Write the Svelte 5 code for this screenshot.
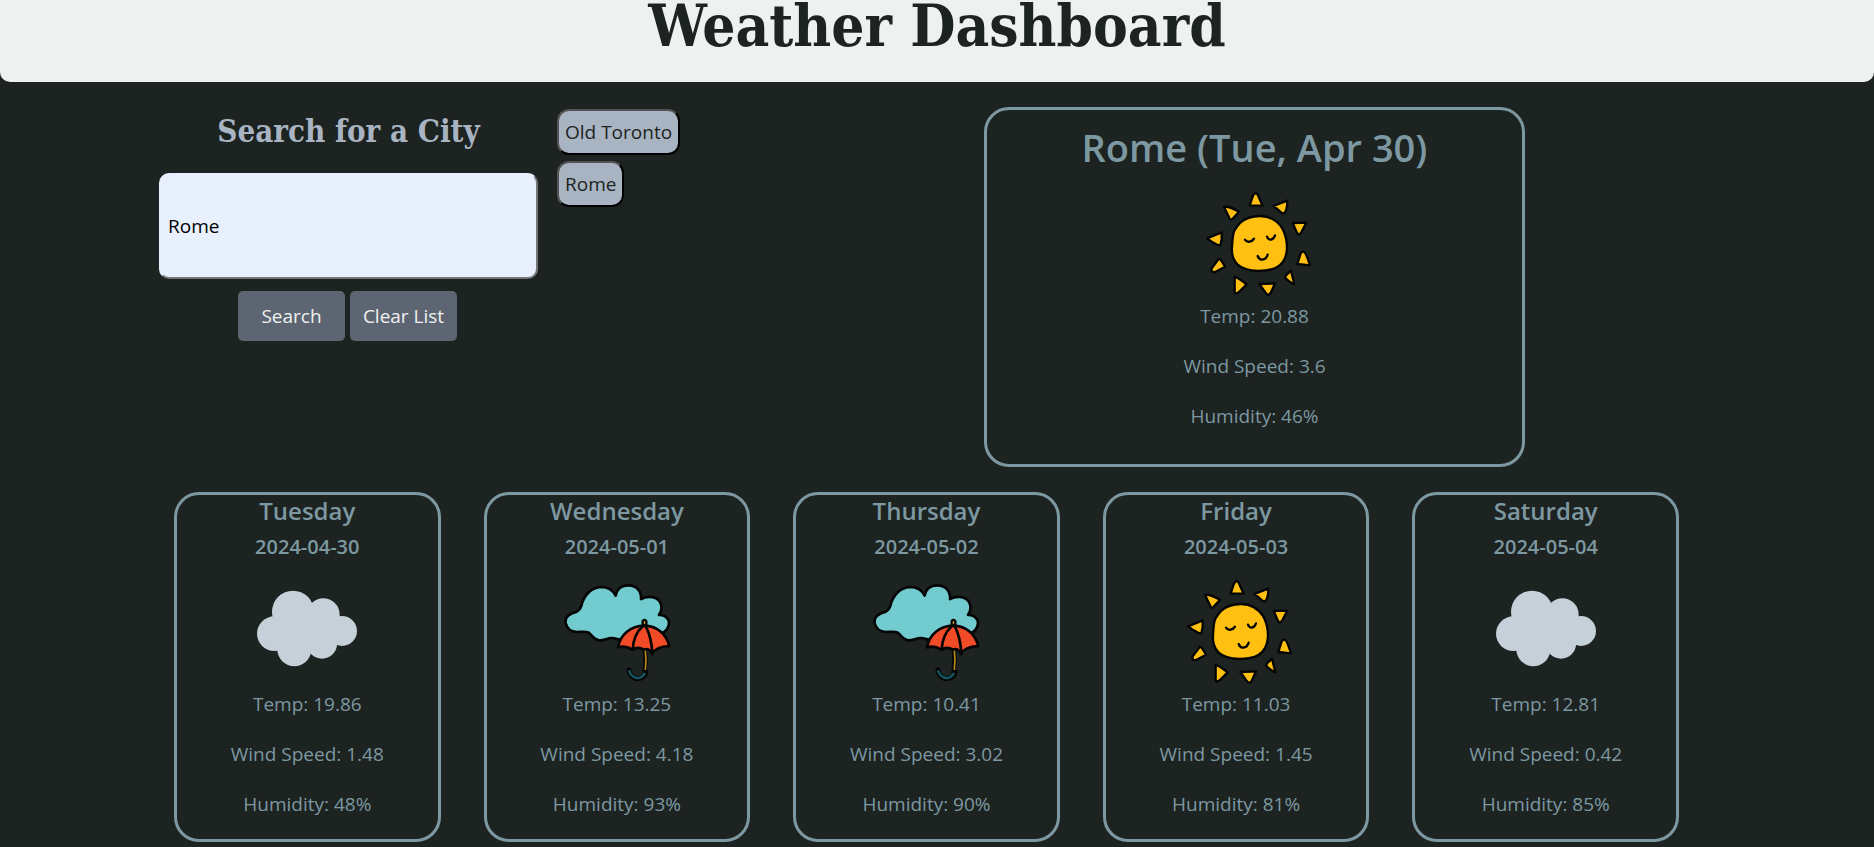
<script>
  let query = $state('Rome');
  let cities = $state(['Old Toronto', 'Rome']);

  const current = { title: 'Rome (Tue, Apr 30)', icon: 'sun', temp: '20.88', wind: '3.6', humidity: 46 };

  const days = [
    { name: 'Tuesday', date: '2024-04-30', icon: 'cloud', temp: '19.86', wind: '1.48', humidity: 48 },
    { name: 'Wednesday', date: '2024-05-01', icon: 'rain', temp: '13.25', wind: '4.18', humidity: 93 },
    { name: 'Thursday', date: '2024-05-02', icon: 'rain', temp: '10.41', wind: '3.02', humidity: 90 },
    { name: 'Friday', date: '2024-05-03', icon: 'sun', temp: '11.03', wind: '1.45', humidity: 81 },
    { name: 'Saturday', date: '2024-05-04', icon: 'cloud', temp: '12.81', wind: '0.42', humidity: 85 }
  ];

  function search(event) {
    event.preventDefault();
    const city = query.trim();
    if (city && !cities.includes(city)) cities.push(city);
  }
</script>

{#snippet weatherIcon(kind)}
  {#if kind === 'sun'}
    <svg class="icon" viewBox="0 0 390 360" role="img" aria-label="Clear sky">
      <g fill="#ffc012" stroke="#050505" stroke-width="7" stroke-linejoin="round" stroke-linecap="round">
        <path d="M150 126C168 109 186 105 210 105C240 105 262 119 277 142C287 160 291 181 291 202C290 226 280 247 262 258C245 268 225 270 204 270C176 269 157 264 143 251C128 236 124 219 126 197C128 176 127 162 133 149Q140 137 150 126Z" />
        <path d="M197 36Q191 37 187 49L179 74L218 74L207 50Q202 36 197 36Z" />
        <path d="M251 75L291 59Q294 70 287 91Q281 101 274 95Z" />
        <path d="M308 126L349 125L334 154Q327 165 321 156Z" />
        <path d="M339 212Q347 211 360 253L322 249L331 220Q334 212 339 212Z" />
        <path d="M303 269L313 309Q304 308 287 292Q284 288 291 280Z" />
        <path d="M208 309L255 307L242 336Q235 346 228 337Z" />
        <path d="M134 288Q141 287 170 310L147 333Q135 341 134 335Z" />
        <path d="M87 233Q92 234 105 257L76 273Q62 276 65 262Z" />
        <path d="M51 172L95 154Q97 174 91 193Q86 195 68 184Z" />
        <path d="M102 78Q115 74 147 92L130 111Q121 122 117 109Z" />
      </g>
      <path d="M165 176Q170 184 179 182Q188 180 192 173M231 167Q235 177 243 176Q251 174 255 163M203 225Q207 236 217 236Q229 235 233 221" fill="none" stroke="#050505" stroke-width="7" stroke-linecap="round" />
    </svg>
  {:else if kind === 'rain'}
    <svg class="icon" viewBox="6 -5 390 360" role="img" aria-label="Rain">
      <g stroke="#050505" stroke-width="8" stroke-linejoin="round" stroke-linecap="round">
        <path d="M197 75C188 57 174 49 153 49C125 50 101 73 94 106C88 122 77 124 64 129C50 135 45 146 47 157C51 174 62 183 80 184C95 184 106 181 116 186C128 195 132 208 148 209C163 210 172 201 187 202C199 204 205 208 216 207L330 190C347 184 356 173 357 158C357 143 345 132 327 133C336 120 337 105 329 92C317 76 290 75 273 85C275 64 262 44 235 44C214 44 200 56 197 75Z" fill="#72cbcf" />
        <path d="M283 165C242 166 211 191 204 230Q226 223 247 237Q263 226 282 237Q298 230 306 250Q317 228 358 226C348 188 320 166 283 165Z" fill="#f14c27" />
        <path d="M277 168Q251 190 248 236M288 168Q305 202 307 250" fill="none" />
        <path d="M285 239Q289 270 284 303" fill="none" stroke-width="13" />
        <path d="M237 298C240 321 261 329 277 320Q286 315 288 304" fill="none" stroke-width="15" />
      </g>
      <path d="M286 240Q290 270 286 298" fill="none" stroke="#b98a16" stroke-width="5" />
      <path d="M237 299C242 319 261 327 274 319Q282 314 285 307" fill="none" stroke="#145a62" stroke-width="7" />
      <path d="M278 163V151Q283 145 289 151V163Z" fill="#f8b912" stroke="#050505" stroke-width="7" stroke-linejoin="round" />
    </svg>
  {:else}
    <svg class="icon" viewBox="6 -5 390 360" role="img" aria-label="Cloudy">
      <g fill="#c6d0d9">
        <circle cx="159" cy="123" r="63" />
        <circle cx="250" cy="132" r="49" />
        <circle cx="306" cy="181" r="45" />
        <circle cx="103" cy="189" r="52" />
        <circle cx="163" cy="236" r="51" />
        <circle cx="246" cy="219" r="45" />
        <path d="M103 137L159 110L250 130L306 170L290 225L246 230L163 240L103 230Z" />
      </g>
    </svg>
  {/if}
{/snippet}

{#snippet readings(item)}
  <p>Temp: {item.temp}</p>
  <p>Wind Speed: {item.wind}</p>
  <p>Humidity: {item.humidity}%</p>
{/snippet}

<header><h1>Weather Dashboard</h1></header>

<main>
  <section class="top">
    <form class="search" onsubmit={search}>
      <h2><label for="city">Search for a City</label></h2>
      <input id="city" type="text" bind:value={query} />
      <div class="actions">
        <button type="submit">Search</button>
        <button type="button" onclick={() => (cities = [])}>Clear List</button>
      </div>
    </form>

    <div class="history">
      {#each cities as city}
        <button type="button" onclick={() => (query = city)}>{city}</button>
      {/each}
    </div>

    <article class="card current">
      <h2>{current.title}</h2>
      {@render weatherIcon(current.icon)}
      {@render readings(current)}
    </article>
  </section>

  <section class="forecast">
    {#each days as day}
      <article class="card day">
        <h3>{day.name}</h3>
        <h4>{day.date}</h4>
        {@render weatherIcon(day.icon)}
        {@render readings(day)}
      </article>
    {/each}
  </section>
</main>

<style>
  :global(body) {
    background: #1c2321;
    color: #7d98a1;
    font-family: 'Open Sans', 'Noto Sans', sans-serif;
    font-size: 19px;
    line-height: 30px;
  }

  h1, h2, h3, h4, p {
    margin: 0;
  }

  header {
    background: #eef1ef;
    color: #1c2321;
    border-radius: 0 0 10px 10px;
    padding-bottom: 30px;
    text-align: center;
  }

  h1 {
    font-family: 'DejaVu Serif Condensed', 'DejaVu Serif', serif;
    font-size: 58px;
    font-weight: 700;
    line-height: 52px;
  }

  main {
    padding: 25px 159px 6px;
  }

  .top {
    display: grid;
    grid-template-columns: 379fr 408fr 541fr 171fr;
    gap: 19px;
    align-items: start;
  }

  .search {
    text-align: center;
  }

  .search h2 {
    color: #a9b4c2;
    font-family: 'DejaVu Serif Condensed', 'DejaVu Serif', serif;
    font-size: 31px;
    font-weight: 700;
    line-height: 48px;
    margin-bottom: 18px;
  }

  input {
    box-sizing: border-box;
    display: block;
    width: 100%;
    height: 106px;
    padding: 0 7px;
    border: 2px solid #767676;
    border-top-color: #e8f0fe;
    border-left-color: #e8f0fe;
    border-radius: 10px;
    background: #e8f0fe;
    color: #000;
    font: inherit;
  }

  .actions {
    display: flex;
    justify-content: center;
    gap: 5px;
    margin-top: 12px;
    padding-right: 2px;
  }

  .actions button {
    width: 107px;
    height: 50px;
    padding: 0;
    border: 0;
    border-radius: 5px;
    background: #5e6572;
    color: #eef1ef;
    font: inherit;
  }

  .history {
    display: flex;
    flex-direction: column;
    align-items: flex-start;
    gap: 6px;
    padding-top: 2px;
  }

  .history button {
    height: 46px;
    padding: 0 6px;
    border: 2px outset #000;
    border-radius: 12px;
    background: #a9b4c2;
    color: #1c2321;
    font: inherit;
  }

  .card {
    box-sizing: border-box;
    border: 3px solid #7d98a1;
    border-radius: 25px;
    text-align: center;
  }

  .current {
    padding: 13px 0 13px;
  }

  .current h2 {
    font-size: 38px;
    font-weight: 600;
    line-height: 48px;
    margin-bottom: 10px;
  }

  .icon {
    display: block;
    width: 130px;
    height: 120px;
    margin: 0 auto;
  }

  p {
    padding-bottom: 20px;
  }

  .forecast {
    display: grid;
    grid-template-columns: repeat(5, 1fr);
    gap: 43px;
    margin: 25px 36px 0 15px;
  }

  .day h3 {
    font-size: 24px;
    font-weight: 600;
    line-height: 32px;
  }

  .day h4 {
    font-size: 20px;
    font-weight: 600;
    line-height: 24px;
    padding: 8px 0 10px;
  }
</style>
